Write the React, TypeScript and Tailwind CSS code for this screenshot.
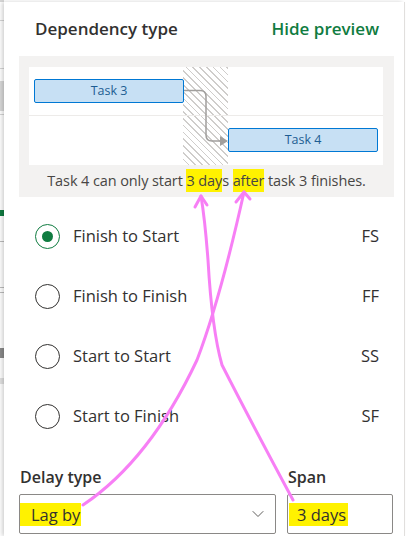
import { ChevronDown } from 'lucide-react';

const options = [
  { label: 'Finish to Start', code: 'FS', checked: true },
  { label: 'Finish to Finish', code: 'FF', checked: false },
  { label: 'Start to Start', code: 'SS', checked: false },
  { label: 'Start to Finish', code: 'SF', checked: false },
];

function Radio({ checked }: { checked: boolean }) {
  return checked ? (
    <span className="flex h-[25px] w-[25px] items-center justify-center rounded-full border border-[#107c41]">
      <span className="h-[11px] w-[11px] rounded-full bg-[#107c41]" />
    </span>
  ) : (
    <span className="h-[25px] w-[25px] rounded-full border border-[#323130]" />
  );
}

function Preview() {
  return (
    <div className="ml-[15px] mr-[10px] bg-[#f3f2f1] px-[10px] pt-[11px]">
      {/* Chart */}
      <div className="relative h-[98px] w-[354px] bg-white">
        <div className="absolute left-[154px] top-0 h-full w-[45px] bg-[repeating-linear-gradient(45deg,#ffffff_0px,#ffffff_3.6px,#cfcdcb_3.6px,#cfcdcb_4.8px)]" />
        <div className="relative flex h-[49px] items-start border-b border-[#edebe9] pt-[12px] pl-[5px]">
          <div className="flex h-[24px] w-[150px] items-center justify-center rounded-[2px] border border-[#0078d4] bg-[#c7e0f4] text-[12.5px] text-[#1d5d92]">
            Task 3
          </div>
        </div>
        <div className="relative flex h-[49px] items-start pt-[12px] pl-[199px]">
          <div className="flex h-[24px] w-[150px] items-center justify-center rounded-[2px] border border-[#0078d4] bg-[#c7e0f4] text-[12.5px] text-[#1d5d92]">
            Task 4
          </div>
        </div>
        <svg className="absolute left-0 top-0" width="354" height="98" viewBox="0 0 354 98">
          <path d="M155 23.5 H171 Q177 23.5 177 29.5 V68 Q177 74 183 74 H192" fill="none" stroke="#a19f9d" strokeWidth="1.5" />
          <path d="M191 69 L199 74 L191 79 Z" fill="#a19f9d" />
        </svg>
      </div>
      <div className="flex h-[32px] items-center justify-center text-[14.5px] tracking-[-0.1px] text-[#484644]">
        <span>
          Task 4 can only start <span className="bg-[#fff200] py-[2px]">3 day</span>s{' '}
          <span className="bg-[#fff200] py-[2px]">after</span> task 3 finishes.
        </span>
      </div>
    </div>
  );
}

export default function App() {
  return (
    <div className="relative flex h-[536px] w-[410px] overflow-hidden bg-white font-['Open_Sans',sans-serif]">
      {/* Sheet behind the pane */}
      <div className="flex w-[4px] flex-col bg-white">
        <div className="h-[2px] bg-[#d6d6d6]" />
        <div className="mt-[18px] h-px bg-[#d6d6d6]" />
        <div className="mt-[47px] h-px bg-[#d6d6d6]" />
        <div className="mt-[12px] h-[30px] bg-[#d9d9d9]" />
        <div className="mt-[3px] h-px bg-[#d6d6d6]" />
        <div className="mt-[95px] h-[6px] bg-[#107c41]" />
        <div className="mt-[25px] h-px bg-[#bdbdbd]" />
        <div className="mt-[45px] h-px bg-[#bdbdbd]" />
        <div className="mt-[4px] h-px bg-[#bdbdbd]" />
        <div className="mt-[55px] h-[10px] bg-[#8a8a8a]" />
        <div className="mt-[20px] h-[6px] bg-[#e1e1e1]" />
      </div>

      {/* Pane */}
      <div className="mt-[2px] flex w-[400px] flex-col bg-white shadow-[-2px_0_4px_rgba(0,0,0,0.18)]">
        <div className="flex h-[54px] items-center justify-between pl-[31px] pr-[25px]">
          <h1 className="text-[17px] font-semibold text-[#323130]">Dependency type</h1>
          <button className="text-[17px] font-semibold text-[#107c41]">Hide preview</button>
        </div>

        <Preview />

        <div className="mt-[9px] flex flex-col pl-[31px] pr-[25px]">
          {options.map((o) => (
            <div key={o.code} className="flex h-[60px] items-center">
              <Radio checked={o.checked} />
              <span className="ml-[13px] flex-1 text-[16.5px] text-[#323130]">{o.label}</span>
              <span className="text-[16.5px] text-[#323130]">{o.code}</span>
            </div>
          ))}
        </div>

        <div className="flex gap-[11px] pl-[15px] pr-[11px]">
          <div className="flex w-[257px] flex-col">
            <div className="flex h-[48px] items-end pb-[5px] pl-[1px] text-[16px] font-semibold text-[#323130]">
              Delay type
            </div>
            <div className="flex h-[40px] items-center justify-between rounded-[2px] border border-[#8a8886] pr-[7px]">
              <span className="h-[23px] bg-[#fff200] pl-[11px] pr-[1px] text-[16.5px] leading-[23px] text-[#323130]">
                Lag by
              </span>
              <ChevronDown size={20} strokeWidth={1.2} color="#605e5c" />
            </div>
          </div>
          <div className="flex w-[106px] flex-col">
            <div className="flex h-[48px] items-end pb-[5px] pl-[1px] text-[16px] font-semibold text-[#323130]">
              Span
            </div>
            <div className="flex h-[40px] items-center rounded-[2px] border border-[#8a8886] pl-[1px]">
              <span className="h-[23px] bg-[#fff200] pl-[8px] pr-[2px] text-[16.5px] leading-[23px] text-[#323130]">
                3 days
              </span>
            </div>
          </div>
        </div>
      </div>
      <div className="mt-[2px] w-px bg-[#e1dfdd]" />

      {/* Hand-drawn annotations */}
      <svg className="pointer-events-none absolute left-0 top-0" width="410" height="536" viewBox="0 0 410 536">
        <g fill="none" stroke="#f77ff5" strokeWidth="3" strokeLinecap="round" strokeLinejoin="round">
          <path d="M83 505 Q150 460 197 360 Q220 300 244 192" />
          <path d="M236 202 L244 192 L250 199" />
          <path d="M293 500 Q250 420 222 365 Q212 330 208 260 Q205 220 201 196" />
          <path d="M195 207 L201 196 L207 205" />
        </g>
      </svg>
    </div>
  );
}
